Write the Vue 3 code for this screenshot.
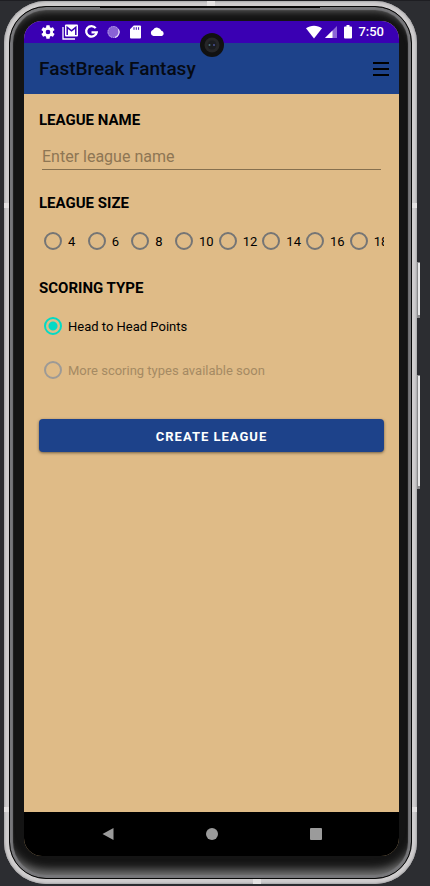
<script setup>
import { ref } from 'vue'

const leagueName = ref('')
const size = ref(null)
const sizes = [4, 6, 8, 10, 12, 14, 16, 18]
const scoring = ref('points')
</script>

<template>
  <div class="stage">
    <div class="phone">
      <span class="antenna left upper"></span>
      <span class="antenna right upper"></span>
      <span class="antenna left lower"></span>
      <span class="antenna right lower"></span>
      <span class="antenna head"></span>
      <span class="antenna foot"></span>
      <span class="speaker"></span>
      <span class="side-key power"></span>
      <span class="side-key volume"></span>

      <div class="bezel">
        <div class="screen">
          <div class="status">
            <div class="notices">
              <svg width="16" height="16" viewBox="0 0 24 24"><path fill="#fff" d="M19.4 13a7.500 7.500 0 0 0 0-2l2.100-1.650a.5.5 0 0 0 .12-.64l-2-3.460a.5.5 0 0 0-.61-.22l-2.490 1a7.300 7.300 0 0 0-1.690-.98l-.38-2.650A.49.49 0 0 0 14 2h-4a.49.49 0 0 0-.49.42l-.38 2.650c-.61.25-1.170.59-1.690.98l-2.490-1a.5.5 0 0 0-.61.22l-2 3.460a.5.5 0 0 0 .12.64L4.570 11a7.900 7.900 0 0 0 0 2l-2.110 1.650a.5.5 0 0 0-.12.64l2 3.460c.12.22.39.3.61.22l2.490-1c.52.4 1.080.73 1.690.98l.38 2.650c.03.24.24.42.49.42h4c.25 0 .46-.18.49-.42l.38-2.650a7.700 7.700 0 0 0 1.690-.98l2.490 1c.23.09.49 0 .61-.22l2-3.460a.5.5 0 0 0-.12-.64zM12 15.500a3.500 3.500 0 1 1 0-7 3.500 3.500 0 0 1 0 7z"/></svg>
              <svg width="16" height="16" viewBox="0 0 16 16"><path fill="none" stroke="#fff" stroke-width="1.300" d="M1 3v12h12"/><rect x="3" y=".5" width="13" height="12" rx="1" fill="#fff"/><path fill="none" stroke="#3a00b3" stroke-width="1.500" d="M5.200 11V3.400l4.300 3.400 4.300-3.400V11"/></svg>
              <svg width="16" height="16" viewBox="0 0 16 16"><path fill="none" stroke="#fff" stroke-width="2.300" d="M11.700 4.100A5.300 5.300 0 1 0 12.700 8.400H7.500"/></svg>
              <svg width="16" height="16" viewBox="0 0 16 16"><circle cx="7.500" cy="8" r="6" fill="#8a62d6"/><circle cx="7.500" cy="8" r="5.500" fill="none" stroke="#b79fe8" stroke-width="1" stroke-dasharray="1.500 1"/><path fill="none" stroke="#e4daf7" stroke-width="1.200" d="M12.500 5.500a5.700 5.700 0 0 1-3.500 8"/></svg>
              <svg width="16" height="16" viewBox="0 0 16 16"><path fill="#fff" d="M5.800 1.500H12a1 1 0 0 1 1 1v11a1 1 0 0 1-1 1H3a1 1 0 0 1-1-1V5.300z"/><path stroke="#3a00b3" stroke-width="1" d="M6 3.200v2.600M8.300 3.200v2.600M10.600 3.200v2.600"/></svg>
              <svg width="16" height="16" viewBox="0 0 16 16"><path fill="#fff" d="M3.400 12a3.200 3.200 0 0 1-.3-6.200A4.600 4.600 0 0 1 11.400 6.800 2.700 2.700 0 0 1 11.900 12z"/></svg>
            </div>
            <div class="system">
              <svg width="16" height="14" viewBox="0 0 16 14"><path fill="#fff" d="M0 3.200C4.500-.2 11.500-.2 16 3.200L8 13.500z"/></svg>
              <svg width="14" height="14" viewBox="0 0 14 14"><path fill="#8d67d6" d="M13 1v12H1z"/><path fill="#fff" d="M8.500 5.500V13H1z"/></svg>
              <svg class="battery" width="8" height="14" viewBox="0 0 8 14"><path fill="#fff" d="M2.500 0h3v1.500H7a1 1 0 0 1 1 1V12.500a1 1 0 0 1-1 1H1a1 1 0 0 1-1-1V2.500a1 1 0 0 1 1-1h1.500z"/></svg>
              <span class="clock">7:50</span>
            </div>
          </div>

          <header class="app-bar">
            <h1>FastBreak Fantasy</h1>
            <button type="button" class="menu" aria-label="Menu">
              <svg width="16" height="14" viewBox="0 0 16 14"><path stroke="#000" stroke-width="2" d="M0 1h16M0 7h16M0 13h16"/></svg>
            </button>
          </header>

          <form class="content" @submit.prevent>
            <label class="heading" for="league-name">LEAGUE NAME</label>
            <input id="league-name" v-model="leagueName" class="field" type="text" placeholder="Enter league name">

            <fieldset>
              <legend class="heading">LEAGUE SIZE</legend>
              <div class="sizes">
                <label v-for="n in sizes" :key="n" class="option">
                  <input v-model="size" type="radio" name="size" :value="n"><span>{{ n }}</span>
                </label>
              </div>
            </fieldset>

            <fieldset class="scoring">
              <legend class="heading">SCORING TYPE</legend>
              <div class="types">
                <label class="option">
                  <input v-model="scoring" type="radio" name="scoring" value="points"><span>Head to Head Points</span>
                </label>
                <label class="option disabled">
                  <input v-model="scoring" type="radio" name="scoring" value="more" disabled><span>More scoring types available soon</span>
                </label>
              </div>
            </fieldset>

            <button type="submit" class="create">CREATE LEAGUE</button>
          </form>

          <nav class="nav">
            <button type="button" aria-label="Back"><svg width="12" height="14" viewBox="0 0 12 14"><path fill="#9b9b9b" d="M11.500 1v12L.5 7z"/></svg></button>
            <button type="button" aria-label="Home"><svg width="12" height="12" viewBox="0 0 12 12"><circle cx="6" cy="6" r="6" fill="#9b9b9b"/></svg></button>
            <button type="button" aria-label="Overview"><svg width="12" height="12" viewBox="0 0 12 12"><rect width="12" height="12" rx="1" fill="#9b9b9b"/></svg></button>
          </nav>
        </div>
      </div>

      <svg class="camera" width="24" height="24" viewBox="0 0 24 24"><circle cx="12" cy="12" r="12" fill="#111"/><circle cx="12" cy="12" r="7.500" fill="#262628"/><circle cx="12" cy="12" r="4.500" fill="#1b1c20"/><circle cx="9.500" cy="12" r="1" fill="#4c7480"/><circle cx="14" cy="12" r="1" fill="#4a5296"/></svg>
    </div>
  </div>
</template>

<style>
body {
  margin: 0;
  background: #2c2d31;
}
</style>

<style scoped>
* {
  box-sizing: border-box;
}

.stage {
  display: flex;
  min-height: 100vh;
  padding: 0 13px 2px 4px;
  border-top: 1px solid #1e1e22;
  background: #2c2d31;
  font-family: Roboto, "Liberation Sans", sans-serif;
  color: #000;
}

.phone {
  position: relative;
  display: flex;
  flex: 1;
  min-width: 0;
  padding: 5px;
  border-radius: 42px;
  background: #cfcdce;
  box-shadow: inset 0 0 2px 1px #a9a8aa;
}

.bezel {
  display: flex;
  flex: 1;
  min-width: 0;
  padding: 14px 12px 22px 14px;
  border: 1px solid #080808;
  border-radius: 37px;
  background: #141414;
  box-shadow:
    inset 0 0 1px 3px #77777a,
    inset 0 -14px 10px -6px #777,
    inset 0 7px 6px -2px #555;
}

.screen {
  display: flex;
  flex-direction: column;
  flex: 1;
  min-width: 0;
  overflow: hidden;
  border-radius: 18px;
  background: #dfbb87;
}

.status {
  display: flex;
  justify-content: space-between;
  align-items: center;
  height: 22px;
  padding: 0 15px 0 16px;
  background: #3a00b3;
}

.notices {
  display: flex;
  gap: 6px;
}

.system {
  display: flex;
  align-items: center;
  gap: 2px;
}

.battery {
  margin: 0 4px;
}

.clock {
  font-size: 13px;
  font-weight: 500;
  line-height: 22px;
  color: #fff;
}

.app-bar {
  display: flex;
  justify-content: space-between;
  align-items: center;
  height: 51px;
  padding: 1px 10px 0 15px;
  background: #1d428a;
}

h1 {
  margin: 0;
  font-size: 19px;
  font-weight: 500;
  line-height: 24px;
  color: #050a14;
}

button {
  padding: 0;
  border: 0;
  background: none;
  font: inherit;
  cursor: pointer;
}

button svg {
  display: block;
}

.content {
  display: flex;
  flex-direction: column;
  flex: 1;
  padding: 17px 15px;
}

.heading {
  display: block;
  padding: 0;
  font-size: 15px;
  font-weight: 700;
  line-height: 18px;
}

.field {
  height: 28px;
  margin: 13px 3px 24px;
  padding: 2px 0 0;
  border: 0;
  border-bottom: 1px solid #86704f;
  border-radius: 0;
  outline: 0;
  background: none;
  font: 16px Roboto, "Liberation Sans", sans-serif;
  color: #000;
}

.field::placeholder {
  color: #8e7654;
  opacity: 1;
}

fieldset {
  min-width: 0;
  margin: 0;
  padding: 0;
  border: 0;
}

.scoring {
  margin-top: 16px;
}

.sizes {
  display: flex;
  margin-top: 7px;
  overflow: hidden;
}

.sizes .option {
  flex: 0 0 12.66%;
}

.types {
  display: flex;
  flex-direction: column;
  margin-top: 7px;
}

.option {
  display: flex;
  align-items: center;
  gap: 6px;
  height: 44px;
  padding-left: 5px;
  font-size: 13px;
  white-space: nowrap;
}

.option input {
  flex: none;
  width: 18px;
  height: 18px;
  margin: 0;
  border: 2px solid #757575;
  border-radius: 50%;
  appearance: none;
}

.option input:checked {
  border-color: #03dac5;
  background: radial-gradient(circle, #03dac5 4px, transparent 5px);
}

.option.disabled {
  color: #a58a63;
}

.option.disabled input {
  border-color: #9d9a96;
}

.create {
  height: 33px;
  margin-top: 27px;
  padding-top: 1px;
  border-radius: 4px;
  background: #1d428a;
  box-shadow: 0 1px 3px rgba(0, 0, 0, 0.5);
  font-size: 13px;
  font-weight: 700;
  letter-spacing: 1px;
  color: #fff;
}

.nav {
  display: flex;
  justify-content: center;
  height: 44px;
  background: #000;
}

.nav button {
  display: flex;
  justify-content: center;
  align-items: center;
  width: 104px;
}

.camera {
  position: absolute;
  top: 32px;
  left: 50%;
  margin-left: -11px;
}

.antenna {
  position: absolute;
  width: 5px;
  height: 5px;
  background: #e4e2e2;
}

.left {
  left: 0;
}

.right {
  right: 0;
}

.upper {
  top: 202px;
}

.lower {
  bottom: 72px;
}

.head {
  top: 0;
  left: 203px;
  width: 8px;
}

.foot {
  bottom: 0;
  left: 249px;
  width: 8px;
}

.speaker {
  position: absolute;
  top: 5px;
  left: 96px;
  right: 97px;
  height: 2px;
  background: #080808;
}

.side-key {
  position: absolute;
  left: 100%;
  width: 3px;
  border: 1px solid #8a8a8c;
  border-width: 1px 0 3px 1px;
  background: #e9e9e9;
}

.power {
  top: 261px;
  height: 56px;
}

.volume {
  top: 374px;
  height: 114px;
}
</style>
